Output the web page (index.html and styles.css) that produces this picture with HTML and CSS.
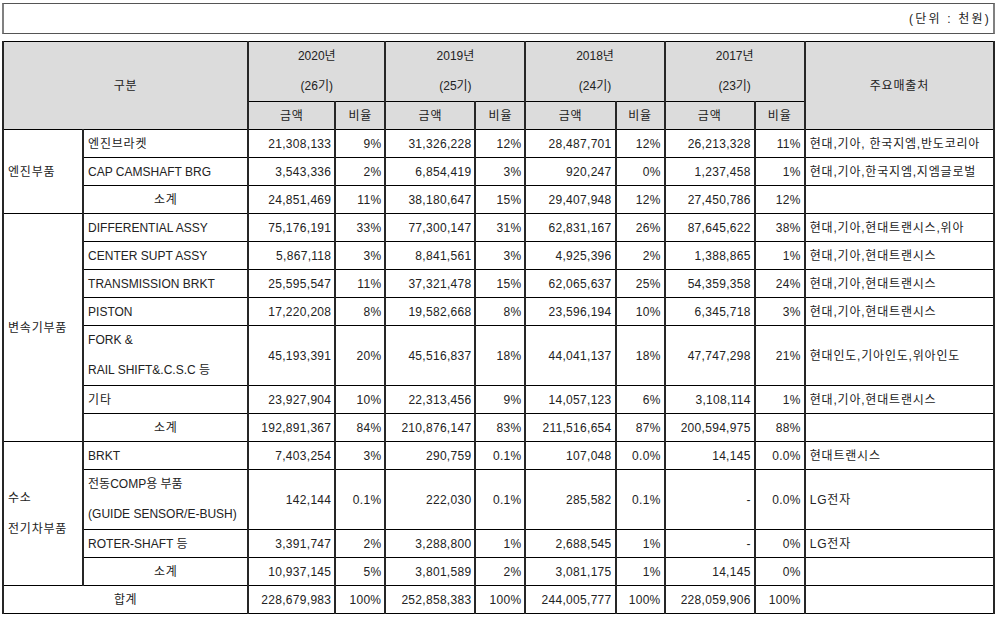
FILE: index.html
```html
<!DOCTYPE html>
<html lang="ko">
<head>
<meta charset="utf-8">
<title>매출실적</title>
<link rel="stylesheet" href="styles.css">
</head>
<body>
<div class="unit">(단위 : 천원)</div>
<table class="sales">
  <colgroup>
    <col class="c-cat"><col class="c-item">
    <col class="c-amt0"><col class="c-rat">
    <col class="c-amt"><col class="c-rat">
    <col class="c-amt"><col class="c-rat49">
    <col class="c-amt"><col class="c-rat">
    <col class="c-cust">
  </colgroup>
  <thead>
    <tr class="h1">
      <th colspan="2" rowspan="2" class="ko">구분</th>
      <th colspan="2" class="two">2020년<br>(26기)</th>
      <th colspan="2" class="two">2019년<br>(25기)</th>
      <th colspan="2" class="two">2018년<br>(24기)</th>
      <th colspan="2" class="two">2017년<br>(23기)</th>
      <th rowspan="2" class="ko">주요매출처</th>
    </tr>
    <tr class="r">
      <th class="ko">금액</th><th class="ko">비율</th>
      <th class="ko">금액</th><th class="ko">비율</th>
      <th class="ko">금액</th><th class="ko">비율</th>
      <th class="ko">금액</th><th class="ko">비율</th>
    </tr>
  </thead>
  <tbody>
    <tr class="r">
      <td rowspan="3" class="cat">엔진부품</td>
      <td class="item ko">엔진브라켓</td>
      <td class="num">21,308,133</td><td class="num">9%</td>
      <td class="num">31,326,228</td><td class="num">12%</td>
      <td class="num">28,487,701</td><td class="num">12%</td>
      <td class="num">26,213,328</td><td class="num">11%</td>
      <td class="cust">현대,기아, 한국지엠,반도코리아</td>
    </tr>
    <tr class="r">
      <td class="item">CAP CAMSHAFT BRG</td>
      <td class="num">3,543,336</td><td class="num">2%</td>
      <td class="num">6,854,419</td><td class="num">3%</td>
      <td class="num">920,247</td><td class="num">0%</td>
      <td class="num">1,237,458</td><td class="num">1%</td>
      <td class="cust">현대,기아,한국지엠,지엠글로벌</td>
    </tr>
    <tr class="r">
      <td class="sub">소계</td>
      <td class="num">24,851,469</td><td class="num">11%</td>
      <td class="num">38,180,647</td><td class="num">15%</td>
      <td class="num">29,407,948</td><td class="num">12%</td>
      <td class="num">27,450,786</td><td class="num">12%</td>
      <td class="cust"></td>
    </tr>

    <tr class="r">
      <td rowspan="7" class="cat">변속기부품</td>
      <td class="item">DIFFERENTIAL ASSY</td>
      <td class="num">75,176,191</td><td class="num">33%</td>
      <td class="num">77,300,147</td><td class="num">31%</td>
      <td class="num">62,831,167</td><td class="num">26%</td>
      <td class="num">87,645,622</td><td class="num">38%</td>
      <td class="cust">현대,기아,현대트랜시스,위아</td>
    </tr>
    <tr class="r">
      <td class="item">CENTER SUPT ASSY</td>
      <td class="num">5,867,118</td><td class="num">3%</td>
      <td class="num">8,841,561</td><td class="num">3%</td>
      <td class="num">4,925,396</td><td class="num">2%</td>
      <td class="num">1,388,865</td><td class="num">1%</td>
      <td class="cust">현대,기아,현대트랜시스</td>
    </tr>
    <tr class="r">
      <td class="item">TRANSMISSION BRKT</td>
      <td class="num">25,595,547</td><td class="num">11%</td>
      <td class="num">37,321,478</td><td class="num">15%</td>
      <td class="num">62,065,637</td><td class="num">25%</td>
      <td class="num">54,359,358</td><td class="num">24%</td>
      <td class="cust">현대,기아,현대트랜시스</td>
    </tr>
    <tr class="r">
      <td class="item">PISTON</td>
      <td class="num">17,220,208</td><td class="num">8%</td>
      <td class="num">19,582,668</td><td class="num">8%</td>
      <td class="num">23,596,194</td><td class="num">10%</td>
      <td class="num">6,345,718</td><td class="num">3%</td>
      <td class="cust">현대,기아,현대트랜시스</td>
    </tr>
    <tr class="r2">
      <td class="item two">FORK &amp;<br>RAIL SHIFT&amp;.C.S.C 등</td>
      <td class="num">45,193,391</td><td class="num">20%</td>
      <td class="num">45,516,837</td><td class="num">18%</td>
      <td class="num">44,041,137</td><td class="num">18%</td>
      <td class="num">47,747,298</td><td class="num">21%</td>
      <td class="cust">현대인도,기아인도,위아인도</td>
    </tr>
    <tr class="r">
      <td class="item ko">기타</td>
      <td class="num">23,927,904</td><td class="num">10%</td>
      <td class="num">22,313,456</td><td class="num">9%</td>
      <td class="num">14,057,123</td><td class="num">6%</td>
      <td class="num">3,108,114</td><td class="num">1%</td>
      <td class="cust">현대,기아,현대트랜시스</td>
    </tr>
    <tr class="r">
      <td class="sub">소계</td>
      <td class="num">192,891,367</td><td class="num">84%</td>
      <td class="num">210,876,147</td><td class="num">83%</td>
      <td class="num">211,516,654</td><td class="num">87%</td>
      <td class="num">200,594,975</td><td class="num">88%</td>
      <td class="cust"></td>
    </tr>

    <tr class="r">
      <td rowspan="4" class="cat cat2">수소<br>전기차부품</td>
      <td class="item">BRKT</td>
      <td class="num">7,403,254</td><td class="num">3%</td>
      <td class="num">290,759</td><td class="num">0.1%</td>
      <td class="num">107,048</td><td class="num">0.0%</td>
      <td class="num">14,145</td><td class="num">0.0%</td>
      <td class="cust">현대트랜시스</td>
    </tr>
    <tr class="r2">
      <td class="item two">전동COMP용 부품<br>(GUIDE SENSOR/E-BUSH)</td>
      <td class="num">142,144</td><td class="num">0.1%</td>
      <td class="num">222,030</td><td class="num">0.1%</td>
      <td class="num">285,582</td><td class="num">0.1%</td>
      <td class="num">-</td><td class="num">0.0%</td>
      <td class="cust">LG전자</td>
    </tr>
    <tr class="r">
      <td class="item">ROTER-SHAFT 등</td>
      <td class="num">3,391,747</td><td class="num">2%</td>
      <td class="num">3,288,800</td><td class="num">1%</td>
      <td class="num">2,688,545</td><td class="num">1%</td>
      <td class="num">-</td><td class="num">0%</td>
      <td class="cust">LG전자</td>
    </tr>
    <tr class="r">
      <td class="sub">소계</td>
      <td class="num">10,937,145</td><td class="num">5%</td>
      <td class="num">3,801,589</td><td class="num">2%</td>
      <td class="num">3,081,175</td><td class="num">1%</td>
      <td class="num">14,145</td><td class="num">0%</td>
      <td class="cust"></td>
    </tr>

    <tr class="r">
      <td colspan="2" class="sub">합계</td>
      <td class="num">228,679,983</td><td class="num">100%</td>
      <td class="num">252,858,383</td><td class="num">100%</td>
      <td class="num">244,005,777</td><td class="num">100%</td>
      <td class="num">228,059,906</td><td class="num">100%</td>
      <td class="cust"></td>
    </tr>
  </tbody>
</table>
</body>
</html>
```
FILE: styles.css
```css
html, body {
  background: #ffffff;
}
body {
  margin: 3px 2px 0 2px;
  font-family: "Liberation Sans", "Noto Sans CJK KR", sans-serif;
  font-size: 12px;
  color: #222222;
}
.unit {
  width: 993px;
  box-sizing: border-box;
  height: 31px;
  border-top: 1px solid #555555;
  border-bottom: 1px solid #555555;
  border-left: 2px solid #808080;
  border-right: 2px solid #808080;
  display: flex;
  align-items: center;
  justify-content: flex-end;
  padding: 0 2px 0 0;
  margin-bottom: 7px;
  line-height: 16px;
  letter-spacing: 2.2px;
}
.sales {
  width: 993px;
  table-layout: fixed;
  border-collapse: collapse;
  border-left: 2px solid #808080;
  border-right: 2px solid #808080;
  border-top: 1px solid #000000;
  border-bottom: 1px solid #000000;
}
.c-cat { width: 80px; }
.c-item { width: 165px; }
.c-amt0 { width: 87px; }
.c-amt { width: 90px; }
.c-rat { width: 50px; }
.c-rat49 { width: 49px; }
.c-cust { width: 189px; }

.sales th,
.sales td {
  border-top: 1px solid #000000;
  border-bottom: 1px solid #000000;
  border-left: 2px solid #262626;
  border-right: 2px solid #262626;
  padding: 0 4px;
  line-height: 16px;
  white-space: nowrap;
  overflow: hidden;
  vertical-align: middle;
}
.sales th {
  background: #dcdcdc;
  font-weight: normal;
  text-align: center;
}
.sales tr.h1 { height: 60px; }
.sales tr.r { height: 28px; }
.sales tr.r2 { height: 60px; }
.sales .two { line-height: 29.5px; }
.sales .ko { letter-spacing: 0.8px; }
.sales .cat { text-align: left; letter-spacing: 0.8px; }
.sales .cat2 { line-height: 31px; }
.sales .item { text-align: left; }
.sales .sub { text-align: center; letter-spacing: 0.5px; }
.sales .num {
  text-align: right;
  letter-spacing: 0.3px;
  padding-right: 3px;
}
.sales .cust { text-align: left; letter-spacing: 0.8px; }
```
